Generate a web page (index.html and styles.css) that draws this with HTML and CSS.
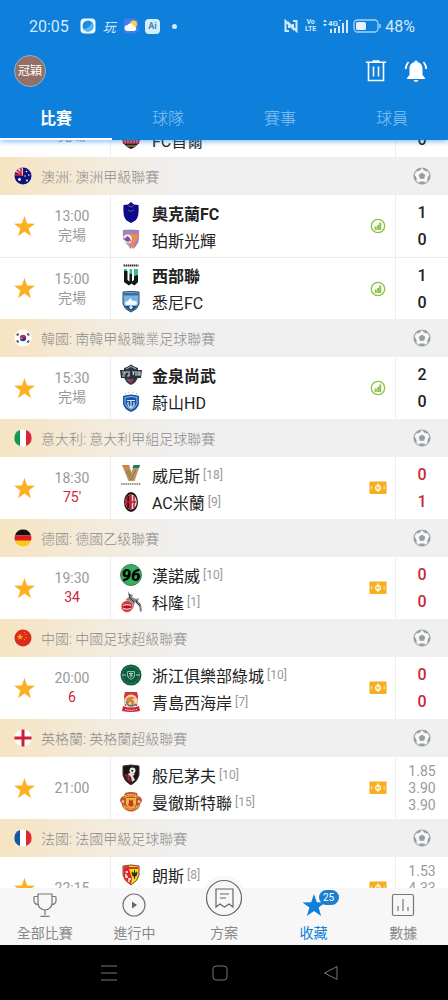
FILE: index.html
```html
<!DOCTYPE html>
<html lang="zh-Hant">
<head>
    <meta charset="UTF-8">
    <meta name="viewport" content="width=device-width, initial-scale=1.0">
    <title>收藏</title>
    <link rel="stylesheet" href="styles.css">
</head>
<body>
    <!-- 共用圖示 -->
    <svg class="sprite" aria-hidden="true">
        <symbol id="star" viewBox="0 0 20 20"><path d="M10 0l2.500 7.100 7.500.2-6 4.500 2.200 7.400L10 14.800l-6.200 4.400L6 11.800 0 7.300l7.500-.2z" fill="currentColor"/></symbol>
        <symbol id="ball" viewBox="0 0 18 18">
            <circle cx="9" cy="9" r="8" fill="#f6f7f7" stroke="#a3a8ac" stroke-width="1.200"/>
            <path d="M9 5.500l3.300 2.400-1.200 3.900H6.900L5.700 7.900zM4.600 1.800L8.200.9l-.6 2-3 1.700-1.600-.7zM13.400 1.800L9.800.9l.6 2 3 1.700 1.600-.7zM.9 8l1.800 1.100 1.100 3.200-.8 2L1 11.500zM17.100 8l-1.800 1.100-1.100 3.200.8 2 2-2.800zM6.500 14.500h5l.4 1.900L9 17.200l-2.900-.8z" fill="#989da2"/>
        </symbol>
        <symbol id="chart" viewBox="0 0 16 16">
            <circle cx="8" cy="8" r="6.700" fill="#fbfef5" stroke="#8ac24a" stroke-width="1.300"/>
            <path d="M4.700 8.500h2V12h-2zM7.200 7H9v5H7.200zM9.200 4.500h2V12h-2z" fill="#8ac24a"/>
        </symbol>
        <symbol id="cash" viewBox="0 0 18 14">
            <rect x=".5" y=".5" width="17" height="12.500" rx=".8" fill="#f6ae1e"/>
            <ellipse cx="9" cy="6.800" rx="2.400" ry="2.600" fill="none" stroke="#fff" stroke-width="1.100"/>
            <path d="M9 2.300v9" stroke="#fff" stroke-width="1.100"/>
            <path d="M2.800 5v3.200M15.200 5v3.200" stroke="#fde3a8" stroke-width="1.200"/>
        </symbol>
    </svg>

    <div class="app">
        <header class="header">
            <div class="status">
                <span class="clock">20:05</span>
                <svg width="16" height="16" viewBox="0 0 16 16"><rect x=".5" y=".5" width="15" height="15" rx="4" fill="#f4fbff"/><circle cx="8" cy="8" r="5.500" fill="#1b8be0"/><path d="M3 11c4 0 7-2 9-7 2 4 0 9-4 9.500-2 .2-4-.8-5-2.500z" fill="#58bdf2"/></svg>
                <span class="play">玩</span>
                <svg width="16" height="16" viewBox="0 0 16 16"><rect x=".5" y=".5" width="15" height="15" rx="4" fill="#3d7ff0"/><circle cx="10.500" cy="6" r="3.500" fill="#ffcf4a"/><path d="M4.500 13a3 3 0 0 1 .2-6 3.300 3.300 0 0 1 6 1.300A2.400 2.400 0 0 1 11.500 13z" fill="#fff"/></svg>
                <span class="ai">Ai</span>
                <span class="dot"></span>
                <span class="spacer"></span>
                <svg width="14" height="14" viewBox="0 0 14 14" fill="none" stroke="#d3e9fb" stroke-width="2"><path d="M5 12H1.500V2L9 9.500V5M9 2h3.500v10L5 4.500V9"/></svg>
                <span class="volte">Vo<br>LTE</span>
                <svg width="26" height="15" viewBox="0 0 26 15" fill="#d3e9fb"><path d="M1 3l2-2.500L5 3zM1 5h4L3 7.500z"/><path d="M8 10h2v4H8zM12 9h2v5h-2zM16 7h2v7h-2zM20 4h2v10h-2zM24 1h2v13h-2z"/><text x="6" y="7" class="net">4G</text><path d="M17 1h2v1h-2z"/></svg>
                <svg width="28" height="14" viewBox="0 0 28 14"><rect x="1" y="1" width="24" height="12" rx="3.500" fill="none" stroke="#a9d3f6" stroke-width="1.300"/><rect x="3" y="3" width="10" height="8" rx="1.500" fill="#e4f2fd"/><path d="M27 5v4" stroke="#a9d3f6" stroke-width="1.500"/></svg>
                <span class="percent">48%</span>
            </div>
            <div class="toolbar">
                <button class="avatar">冠穎</button>
                <span class="spacer"></span>
                <button class="tool" aria-label="刪除"><svg width="22" height="24" viewBox="0 0 22 24" fill="none" stroke="#fff" stroke-width="1.600"><path d="M1 3.300h20M7.500 2h7M3.500 3.500V21.500h15V3.500M8.500 7.500v10M13.500 7.500v10"/></svg></button>
                <button class="tool" aria-label="通知"><svg width="24" height="24" viewBox="0 0 24 24" fill="#fff"><path d="M12 1.500c1 0 1.500.7 1.500 1.500 3.500.8 5 3.500 5 7v6l2.500 3v1H3v-1l2.500-3v-6c0-3.500 1.500-6.200 5-7 0-.8.5-1.500 1.500-1.500z"/><path d="M9.700 21h4.600c-.3 1.300-1.200 2-2.300 2s-2-.7-2.300-2z"/><path d="M4.500 3C2.800 4.800 1.800 7 1.700 10M19.500 3c1.700 1.800 2.700 4 2.800 7" fill="none" stroke="#fff" stroke-width="1.800"/></svg></button>
            </div>
            <nav class="tabs">
                <a class="tab active" href="#matches">比賽</a>
                <a class="tab" href="#teams">球隊</a>
                <a class="tab" href="#events">賽事</a>
                <a class="tab" href="#players">球員</a>
            </nav>
        </header>

        <main class="list" id="list">
            <div class="match">
                <button class="fav" aria-label="收藏"><svg><use href="#star"/></svg></button>
                <div class="time"><span>15:00</span><span>完場</span></div>
                <div class="teams">
                    <div class="team"><svg class="logo" viewBox="0 0 22 22"><circle cx="11" cy="11" r="9" fill="#2b7a4b"/></svg>全北現代</div>
                    <div class="team"><svg class="logo" viewBox="0 0 22 22"><path d="M3 2h16v12q-1 5-8 7-7-2-8-7z" fill="#fff"/><path d="M2 10h18l-1 5H3z" fill="#b8202e"/><path d="M5 10v4M8 10v4M11 10v4M14 10v4M17 10v4" stroke="#eed0c8" stroke-width=".8"/><path d="M4 15h14l-3 3-4 2-4-2z" fill="#261812"/><path d="M6 17h10" stroke="#d4b05b"/></svg>FC首爾</div>
                </div>
                <svg class="mark"><use href="#chart"/></svg>
                <div class="score"><span>1</span><span>0</span></div>
            </div>

            <div class="league">
                <svg class="flag" viewBox="0 0 18 18"><circle cx="9" cy="9" r="8.500" fill="#12127c"/><path d="M1.500 5L9 9V.5Q4 .5 1.500 5z" fill="#e9c9d2"/><path d="M1 8h7M7 1v8M3 3l5 5" stroke="#d8203a" stroke-width="1.600"/><g fill="#fff"><circle cx="5.500" cy="12.500" r="1.400"/><circle cx="12.500" cy="4.500" r=".8"/><circle cx="14.800" cy="8" r=".8"/><circle cx="11" cy="9" r=".7"/><circle cx="13" cy="13.500" r=".9"/></g></svg>
                <span>澳洲: 澳洲甲級聯賽</span>
                <svg class="ball"><use href="#ball"/></svg>
            </div>
            <div class="match">
                <button class="fav" aria-label="收藏"><svg><use href="#star"/></svg></button>
                <div class="time"><span>13:00</span><span>完場</span></div>
                <div class="teams">
                    <div class="team win"><svg class="logo" viewBox="0 0 22 22"><path d="M11 0l3 2.500 4.500.5q1 12-3 15.500L11 21l-4.500-2.500Q2.500 15 3.500 3L8 2.500z" fill="#0d0a8c"/><path d="M8 3.500l3 1.500 3-1.500M8 8l3 1.500L14 8" fill="none" stroke="#5a5a78" stroke-width="1"/></svg>奧克蘭FC</div>
                    <div class="team"><svg class="logo" viewBox="0 0 22 22"><path d="M3 1q8-1 16 0v7q0 6-3 9l-3 3-1-2-2 2-1-3-4-3q-3-4-2-13z" fill="#a582bb"/><path d="M3 8q4-4 10-3 4 1 6-2-1 9-5 12l-1 5-2-4-2 2-1-3-4-3z" fill="#e88960"/><circle cx="7.500" cy="10" r="4.500" fill="#f4f0f4"/><path d="M7.500 7.500l2.300 1.800-.8 2.700H6L5.200 9.300zM3.500 9l1 2M10 12.500l1-2M8 14v-1" fill="#78549c" stroke="#78549c"/></svg>珀斯光輝</div>
                </div>
                <svg class="mark"><use href="#chart"/></svg>
                <div class="score"><span>1</span><span>0</span></div>
            </div>
            <div class="match divided">
                <button class="fav" aria-label="收藏"><svg><use href="#star"/></svg></button>
                <div class="time"><span>15:00</span><span>完場</span></div>
                <div class="teams">
                    <div class="team win"><svg class="logo" viewBox="0 0 22 22"><path d="M3.500 1.500h15" stroke="#333" stroke-width="2" stroke-dasharray="1.500 .5"/><path d="M4 7h3.500v9l2 1.500V9H12v8.500l2-1.500V9h4v9l-3.500 3.500-3-2-2.500 2-5-3.500z" fill="#101817"/><path d="M4 5h3v2H4zM9.500 5H12v5H9.500zM14 5h4v6l-4 1z" fill="#3dbb8b"/></svg>西部聯</div>
                    <div class="team"><svg class="logo" viewBox="0 0 22 22"><path d="M3 1q8-1 16 0v12q-1 5-8 8-7-3-8-8z" fill="#78b4e2" stroke="#27456d"/><path d="M4 2h14v2.500H4z" fill="#3e6c9b"/><path d="M5 13q0-3 3-3l2-3 3 3q4-1 4 3l-2 1H6z" fill="#f3f9fc"/><path d="M4.500 15h13q-2 3-6.500 5-4.500-2-6.500-5z" fill="#264a78"/><path d="M11 14l2 2.500-2 2-2-2z" fill="#cfe5f5"/></svg>悉尼FC</div>
                </div>
                <svg class="mark"><use href="#chart"/></svg>
                <div class="score"><span>1</span><span>0</span></div>
            </div>

            <div class="league">
                <svg class="flag" viewBox="0 0 18 18"><circle cx="9" cy="9" r="8.500" fill="#fff"/><path d="M5.800 9a3.200 3.200 0 0 1 6.400 0z" fill="#cc2a42"/><path d="M5.800 9a3.200 3.200 0 0 0 6.400 0q-1.600-1.600-3.200 0-1.600 1.300-3.200 0z" fill="#22418c"/><path d="M3 6.500l1.500-2M13.500 4.500l1.500 2M3 11.500l1.500 2M13.500 13.500l1.500-2" stroke="#333" stroke-width="2" stroke-dasharray="1.300 .4"/></svg>
                <span>韓國: 南韓甲級職業足球聯賽</span>
                <svg class="ball"><use href="#ball"/></svg>
            </div>
            <div class="match">
                <button class="fav" aria-label="收藏"><svg><use href="#star"/></svg></button>
                <div class="time"><span>15:30</span><span>完場</span></div>
                <div class="teams">
                    <div class="team win"><svg class="logo" viewBox="0 0 22 22"><path d="M4 4l3-1 4-2.500L15 3l3 1v9q-1 5-7 8-6-3-7-8z" fill="#26384b"/><path d="M6 5l5-2.500L16 5" stroke="#a3b3b3" fill="none"/><path d="M0 6h22l-1 8H1z" fill="#27333c"/><path d="M2 8h3v2H2.500M2 12h3M7 7v2M9 7v5H7M12 8h2l-1 3M16 7v5M18 8h2v3h-2z" fill="none" stroke="#d5dbd9" stroke-width="1.100"/><path d="M8 15h6l-3 5z" fill="#c8293e"/><path d="M6 15h3l1 4z" fill="#416ca2"/></svg>金泉尚武</div>
                    <div class="team"><svg class="logo" viewBox="0 0 22 22"><path d="M5 2.500h1M8.500 1.500h1M12.500 1.500h1M16 2.500h1" stroke="#dfc067" stroke-width="1.300"/><path d="M3 5q8-3 16 0v8q-1 5-8 8-7-3-8-8z" fill="#1755a6"/><path d="M5 6.500q6-2 12 0v6q-1 4-6 6-5-2-6-6z" fill="none" stroke="#d5e5f3" stroke-width=".7"/><path d="M7 9.500h8M8 11v3q1 2 3 3 2-1 3-3v-3M11 10v6" fill="none" stroke="#d7e5ef" stroke-width="1.200"/></svg>蔚山HD</div>
                </div>
                <svg class="mark"><use href="#chart"/></svg>
                <div class="score"><span>2</span><span>0</span></div>
            </div>

            <div class="league">
                <svg class="flag" viewBox="0 0 18 18"><circle cx="9" cy="9" r="8.500" fill="#fff"/><path d="M6 1a8.500 8.500 0 0 0 0 16z" fill="#169850"/><path d="M12 1a8.500 8.500 0 0 1 0 16z" fill="#d92739"/></svg>
                <span>意大利: 意大利甲組足球聯賽</span>
                <svg class="ball"><use href="#ball"/></svg>
            </div>
            <div class="match live">
                <button class="fav" aria-label="收藏"><svg><use href="#star"/></svg></button>
                <div class="time"><span>18:30</span><span class="minute">75'</span></div>
                <div class="teams">
                    <div class="team"><svg class="logo" viewBox="0 0 22 22"><path d="M2 1h7l2.500 7L14 1h6l-5.500 16h-6z" fill="#b79661"/><path d="M2 1h6.500l1 3H4z" fill="#dc7b3b"/><path d="M13.500 1H20l-1 3h-6.500z" fill="#1b7e5b"/><path d="M6 6l5 10 5-10M8 6l3 6" fill="none" stroke="#8d7149"/><path d="M1 20h20" stroke="#a69376" stroke-width="2" stroke-dasharray="1.500 .7"/></svg>威尼斯<small>[18]</small></div>
                    <div class="team"><svg class="logo" viewBox="0 0 22 22"><ellipse cx="11" cy="11" rx="7" ry="10" fill="#1d1a1d"/><ellipse cx="11" cy="11" rx="5.800" ry="7.500" fill="#e4d7d2"/><path d="M11 3.500a5.800 7.500 0 0 0 0 15z" fill="#c81e32"/><path d="M8.200 5v12" stroke="#1d1a1d" stroke-width="1.500"/><path d="M11 4v14M6 11h10M14 5v12" stroke="#bd2234" stroke-width="1.500"/></svg>AC米蘭<small>[9]</small></div>
                </div>
                <svg class="mark cash"><use href="#cash"/></svg>
                <div class="score"><span>0</span><span>1</span></div>
            </div>

            <div class="league">
                <svg class="flag" viewBox="0 0 18 18"><path d="M1 6.200a8.500 8.500 0 0 1 16 0z" fill="#111"/><path d="M1 6.200h16a8.500 8.500 0 0 1 0 5.600H1a8.500 8.500 0 0 1 0-5.600z" fill="#d9201d"/><path d="M1 11.800h16a8.500 8.500 0 0 1-16 0z" fill="#f8cb12"/></svg>
                <span>德國: 德國乙级聯賽</span>
                <svg class="ball"><use href="#ball"/></svg>
            </div>
            <div class="match live">
                <button class="fav" aria-label="收藏"><svg><use href="#star"/></svg></button>
                <div class="time"><span>19:30</span><span class="minute">34</span></div>
                <div class="teams">
                    <div class="team"><svg class="logo" viewBox="0 0 22 22"><circle cx="11" cy="11" r="10.500" fill="#35ae60" stroke="#4a7a5c"/><text x="11" y="17" class="number">96</text></svg>漢諾威<small>[10]</small></div>
                    <div class="team"><svg class="logo" viewBox="0 0 22 22"><path d="M8 0l2 3 3 1-1 2 4 2 3-1-1 3 3 3 1 7-2 1-1-6-4-4-2 7-2-4-4-2-1-4 3-2z" fill="#85878b"/><path d="M9 3l1 4 4 4M16 9l1 3 3 3" fill="none" stroke="#303238"/><circle cx="7" cy="15.500" r="5.800" fill="#d9303b" stroke="#efc6c9" stroke-width=".6"/><path d="M3 14.500q4-2 8 0M3 17.500q4 1.500 8 0" fill="none" stroke="#fff" stroke-width=".8"/><path d="M4 16h6.500" stroke="#7d1822" stroke-width="1.800" stroke-dasharray="1.500 .6"/></svg>科隆<small>[1]</small></div>
                </div>
                <svg class="mark cash"><use href="#cash"/></svg>
                <div class="score"><span>0</span><span>0</span></div>
            </div>

            <div class="league">
                <svg class="flag" viewBox="0 0 18 18"><circle cx="9" cy="9" r="8.500" fill="#dc2a1c"/><path d="M6 4.500l1 2.200 2.300.2-1.800 1.500.6 2.300L6 9.500l-2 1.200.6-2.300-1.800-1.500L5 6.700z" fill="#f2a428"/><g fill="#f0912b"><circle cx="10.500" cy="3.500" r=".7"/><circle cx="12" cy="5.500" r=".7"/><circle cx="12" cy="8.500" r=".7"/><circle cx="10.500" cy="10.500" r=".7"/></g></svg>
                <span>中國: 中國足球超級聯賽</span>
                <svg class="ball"><use href="#ball"/></svg>
            </div>
            <div class="match live">
                <button class="fav" aria-label="收藏"><svg><use href="#star"/></svg></button>
                <div class="time"><span>20:00</span><span class="minute">6</span></div>
                <div class="teams">
                    <div class="team"><svg class="logo" viewBox="0 0 22 22"><circle cx="11" cy="11" r="10.500" fill="#0b5d3c"/><circle cx="11" cy="11" r="8.500" fill="none" stroke="#5e967d" stroke-width="1" stroke-dasharray="1 1"/><path d="M7.500 7.500h7V12q-1 2.500-3.500 3.500Q8.500 14.500 7.500 12z" fill="#145943" stroke="#b8d1c2" stroke-width=".8"/><path d="M2 11h4M16 11h4M9 9.500h4M11 8.500v5M9 12.500l2-2 2 2" fill="none" stroke="#b8d1c2"/></svg>浙江俱樂部綠城<small>[10]</small></div>
                    <div class="team"><svg class="logo" viewBox="0 0 22 22"><path d="M5 1h12l1 4-1 10H5L4 5z" fill="#d9323e"/><circle cx="11" cy="10" r="6.500" fill="#f2d8b2"/><path d="M6 8q5-5 10 0-2-1-4 0 3 2 2 5-2 3-6 2 4-1 3-4-2 0-3 2z" fill="#d9863b"/><path d="M7 10q-1 4 4 5 3 0 5-2" fill="none" stroke="#4e7f74" stroke-width="1.500"/><path d="M3 15q8 3 16 0l1 5q-9 2-18 0z" fill="#cf2638"/><path d="M5 18.500q6 1.500 12 0" fill="none" stroke="#f5dad6" stroke-dasharray="1.500 .7"/></svg>青島西海岸<small>[7]</small></div>
                </div>
                <svg class="mark cash"><use href="#cash"/></svg>
                <div class="score"><span>0</span><span>0</span></div>
            </div>

            <div class="league">
                <svg class="flag" viewBox="0 0 18 18"><circle cx="9" cy="9" r="8.500" fill="#fff"/><path d="M9 .5v17M.5 9h17" stroke="#cf1d37" stroke-width="3"/></svg>
                <span>英格蘭: 英格蘭超級聯賽</span>
                <svg class="ball"><use href="#ball"/></svg>
            </div>
            <div class="match">
                <button class="fav" aria-label="收藏"><svg><use href="#star"/></svg></button>
                <div class="time"><span>21:00</span></div>
                <div class="teams">
                    <div class="team"><svg class="logo" viewBox="0 0 22 22"><path d="M3 2q8-2 16 0v9q-1 6-8 10-7-4-8-10z" fill="#191516" stroke="#4b3030"/><path d="M5 10h6v9Q5 15 5 10z" fill="#c72a36"/><path d="M7 10v5M10 10v8M12 11h4" stroke="#191516"/><circle cx="12.500" cy="6.500" r="3" fill="#eee"/><path d="M12 5.500l1.500 1-1 1.500-1.500-1z" fill="#222"/><path d="M8 10q2-3 7 0l-2 2 2 4-3 2-1-5z" fill="#dadada"/></svg>般尼茅夫<small>[10]</small></div>
                    <div class="team"><svg class="logo" viewBox="0 0 22 22"><path d="M5 2q6-2 12 0l1 3q4 1 4 5l-2 3q0 4-4 6-5 3-10 0-4-2-4-6l-2-3q0-4 4-5z" fill="#c8502e"/><path d="M4 6q7-4 14 0M3 15q7 6 16 0" fill="none" stroke="#efbd45" stroke-width="2.500"/><path d="M4 6q7-4 14 0M3 15q7 6 16 0" fill="none" stroke="#b93527" stroke-width="1" stroke-dasharray="1.500 1"/><path d="M6 7h10v6q-1 3-5 4-4-1-5-4z" fill="#e5bd45"/><path d="M9 8l2 2 2-2v4l1 2-3 2-3-2 1-2z" fill="#cf3429"/><circle cx="3" cy="10.500" r="1.300" fill="#f1d590"/><circle cx="19" cy="10.500" r="1.300" fill="#f1d590"/></svg>曼徹斯特聯<small>[15]</small></div>
                </div>
                <svg class="mark cash"><use href="#cash"/></svg>
                <div class="odds"><span>1.85</span><span>3.90</span><span>3.90</span></div>
            </div>

            <div class="league">
                <svg class="flag" viewBox="0 0 18 18"><circle cx="9" cy="9" r="8.500" fill="#fff"/><path d="M6 1a8.500 8.500 0 0 0 0 16z" fill="#1557a4"/><path d="M12 1a8.500 8.500 0 0 1 0 16z" fill="#df2632"/></svg>
                <span>法國: 法國甲級足球聯賽</span>
                <svg class="ball"><use href="#ball"/></svg>
            </div>
            <div class="match">
                <button class="fav" aria-label="收藏"><svg><use href="#star"/></svg></button>
                <div class="time"><span>22:15</span></div>
                <div class="teams">
                    <div class="team"><svg class="logo" viewBox="0 0 22 22"><path d="M3 2q8-2 16 0v9q-1 6-8 10-7-4-8-10z" fill="#f4db1d" stroke="#903a27"/><path d="M3.500 2.500L9 2v3l3 9-1 6q-7-4-7.500-9z" fill="#dc2432"/><path d="M4 3h14v2H4z" fill="#c9382d"/><path d="M5.500 8H8M6 10v3h2M8 15h3M9 16v2" stroke="#fff" stroke-width="1.400" fill="none"/><path d="M14.500 6v9M12 9q0-2 2.500 1 2.500-3 2.500-1l-1 3h-3z" fill="#30301a" stroke="#30301a"/></svg>朗斯<small>[8]</small></div>
                    <div class="team"><svg class="logo" viewBox="0 0 22 22"><circle cx="11" cy="11" r="9" fill="#224a86"/></svg>夏亞夫爾</div>
                </div>
                <svg class="mark cash"><use href="#cash"/></svg>
                <div class="odds"><span>1.53</span><span>4.33</span><span>5.50</span></div>
            </div>
        </main>

        <nav class="bottom-nav">
            <a class="item" href="#all">
                <svg width="24" height="26" viewBox="0 0 24 26" fill="none" stroke="#777" stroke-width="1.200"><path d="M5 2h14v9q0 6-7 7-7-1-7-7zM5 4.500H2Q.8 4.500 1 6v3q0 3 5 4M19 4.500h3q1.200 0 1 1.500v3q0 3-5 4M12 18v5M7.500 24.300h9"/></svg>
                <span>全部比賽</span>
            </a>
            <a class="item" href="#live">
                <svg width="24" height="26" viewBox="0 0 24 26"><circle cx="12" cy="13" r="11" fill="none" stroke="#777" stroke-width="1.200"/><path d="M10 9.500l5 3.500-5 3.500z" fill="#666"/></svg>
                <span>進行中</span>
            </a>
            <a class="item plan" href="#plan">
                <svg width="44" height="44" viewBox="0 0 44 44" fill="none" stroke="#666" stroke-width="1.200"><circle cx="22" cy="22" r="22" fill="#f7f7f7" stroke="none"/><circle cx="22" cy="22" r="17.500"/><path d="M14 13h17v18l-4-3-4.500 3-4.500-3-4 3zM18 18h9M18 22h6"/></svg>
                <span>方案</span>
            </a>
            <a class="item active" href="#fav">
                <svg width="24" height="26" viewBox="-2 -3 24 26"><use href="#star" x="-2" y="-1" width="24" height="23"/></svg>
                <b class="badge">25</b>
                <span>收藏</span>
            </a>
            <a class="item" href="#data">
                <svg width="24" height="26" viewBox="0 0 24 26" fill="none" stroke="#777" stroke-width="1.200"><rect x="1.500" y="2.500" width="21" height="21" rx="1.500"/><path d="M7 14v5M12 7v12M17 15v4"/></svg>
                <span>數據</span>
            </a>
        </nav>

        <div class="system-nav">
            <button aria-label="選單"><svg width="16" height="16" viewBox="0 0 16 16"><path d="M0 1h16M0 8h16M0 15h16"/></svg></button>
            <button aria-label="主畫面"><svg width="16" height="16" viewBox="0 0 16 16"><rect x="1" y="1" width="14" height="14" rx="3"/></svg></button>
            <button aria-label="返回"><svg width="16" height="16" viewBox="0 0 16 16"><path d="M14 1.500v13L1.500 8z" stroke-linejoin="round"/></svg></button>
        </div>
    </div>

    <script>
        // 回到上次捲動的位置
        document.getElementById("list").scrollTop = 45;
    </script>
</body>
</html>
```
FILE: styles.css
```css
* {
    box-sizing: border-box;
}
body {
    margin: 0;
    font-family: Roboto, "Noto Sans CJK TC", sans-serif;
    color: #222;
    background: #fff;
}
button {
    border: none;
    padding: 0;
    background: none;
    font-family: inherit;
    cursor: pointer;
}
a {
    color: inherit;
    text-decoration: none;
}
svg {
    display: block;
    flex: none;
}
.sprite {
    width: 0;
    height: 0;
    position: absolute;
}
.spacer {
    flex: 1;
}
.app {
    display: flex;
    flex-direction: column;
    height: 100vh;
}

/* 頂部 */
.header {
    background: #0f7fdc;
    color: #fff;
    box-shadow: 0 1px 6px rgba(15, 127, 220, 0.6);
    z-index: 1;
}
.status {
    display: flex;
    align-items: center;
    height: 52px;
    padding: 0 33px 0 29px;
    color: #d3e9fb;
    font-size: 16px;
}
.clock {
    margin-right: 11px;
}
.play {
    margin: 0 7px;
    font-size: 13px;
    font-style: italic;
}
.ai {
    width: 15px;
    height: 15px;
    margin-left: 6px;
    border-radius: 4px;
    background: #d6eefb;
    color: #3a86b4;
    font-size: 9px;
    font-weight: bold;
    line-height: 15px;
    text-align: center;
}
.dot {
    width: 5px;
    height: 5px;
    margin-left: 12px;
    border-radius: 50%;
    background: #d3e9fb;
}
.volte {
    margin: 0 6px 0 7px;
    font-size: 7px;
    font-weight: bold;
    line-height: 7px;
    text-align: center;
}
.net {
    font-size: 8px;
    font-weight: bold;
}
.status svg + svg {
    margin-left: 5px;
}
.percent {
    margin-left: 4px;
}
.toolbar {
    display: flex;
    align-items: center;
    gap: 17px;
    height: 38px;
    padding: 0 20px 0 14px;
}
.avatar {
    width: 32px;
    height: 32px;
    border: 1px solid #8eb2d2;
    border-radius: 50%;
    background: #946f65;
    color: #fff;
    font-size: 12px;
    line-height: 28px;
    white-space: nowrap;
}
.tabs {
    display: flex;
    height: 50px;
}
.tab {
    flex: 1;
    padding-top: 17px;
    color: #8cc3f1;
    font-size: 16px;
    font-weight: 300;
    line-height: 24px;
    text-align: center;
}
.tab.active {
    border-bottom: 2px solid #fff;
    color: #fff;
    font-weight: bold;
}

/* 比賽列表 */
.list {
    flex: 1;
    min-height: 0;
    overflow-y: auto;
    scrollbar-width: none;
}
.league {
    display: flex;
    align-items: center;
    gap: 9px;
    height: 38px;
    padding: 0 17px 0 14px;
    background: linear-gradient(to right, #f6e4c2, #f0f0f0 180px);
    color: #8c8c8c;
    font-size: 14px;
    font-weight: 300;
}
.flag {
    width: 18px;
    height: 18px;
}
.ball {
    width: 18px;
    height: 18px;
    margin-left: auto;
}
.match {
    display: grid;
    grid-template-columns: 48px 63px 1fr 35px 53px;
    align-items: center;
    height: 62px;
}
.divided {
    border-top: 1px solid #eee;
}
.fav {
    justify-self: center;
    color: #fdb022;
}
.fav svg {
    width: 21px;
    height: 21px;
}
.time {
    display: flex;
    flex-direction: column;
    justify-content: center;
    align-self: stretch;
    padding-right: 14px;
    border-right: 1px solid #eee;
    color: #999;
    font-size: 14px;
    line-height: 19px;
    text-align: center;
}
.minute {
    color: #c8283c;
}
.teams {
    padding-left: 9px;
}
.team {
    display: flex;
    align-items: center;
    height: 27px;
    font-size: 16px;
    white-space: nowrap;
}
.win {
    font-weight: bold;
}
.logo {
    width: 22px;
    height: 22px;
    margin-right: 10px;
}
.number {
    font-size: 17px;
    font-style: italic;
    font-weight: 900;
    text-anchor: middle;
}
.team small {
    margin-left: 3px;
    color: #999;
    font-size: 12px;
}
.mark {
    width: 16px;
    height: 16px;
    justify-self: center;
}
.cash {
    width: 18px;
    height: 14px;
}
.score,
.odds {
    display: flex;
    flex-direction: column;
    justify-content: center;
    align-self: stretch;
    border-left: 1px solid #eee;
    text-align: center;
}
.score {
    font-size: 16px;
    font-weight: 500;
    line-height: 27px;
}
.live .score {
    color: #c8283c;
}
.odds {
    color: #999;
    font-size: 14px;
    line-height: 17px;
}

/* 底部選單 */
.bottom-nav {
    display: flex;
    height: 57px;
    background: #f7f7f7;
    color: #888;
    font-size: 14px;
    z-index: 1;
}
.item {
    flex: 1;
    display: flex;
    flex-direction: column;
    align-items: center;
    justify-content: flex-end;
    gap: 5px;
    position: relative;
    padding-bottom: 2px;
    line-height: 20px;
}
.item.active {
    color: #0f7fdc;
}
.plan {
    gap: 3px;
}
.badge {
    position: absolute;
    top: 2px;
    left: 50%;
    width: 20px;
    height: 15px;
    margin-left: 5px;
    border-radius: 8px;
    background: #1b7fd0;
    color: #fff;
    font-size: 10px;
    font-weight: normal;
    line-height: 15px;
    text-align: center;
}
.system-nav {
    display: flex;
    justify-content: center;
    align-items: center;
    gap: 95px;
    height: 55px;
    padding-right: 8px;
    background: #000;
}
.system-nav svg {
    fill: none;
    stroke: #777;
}
```
